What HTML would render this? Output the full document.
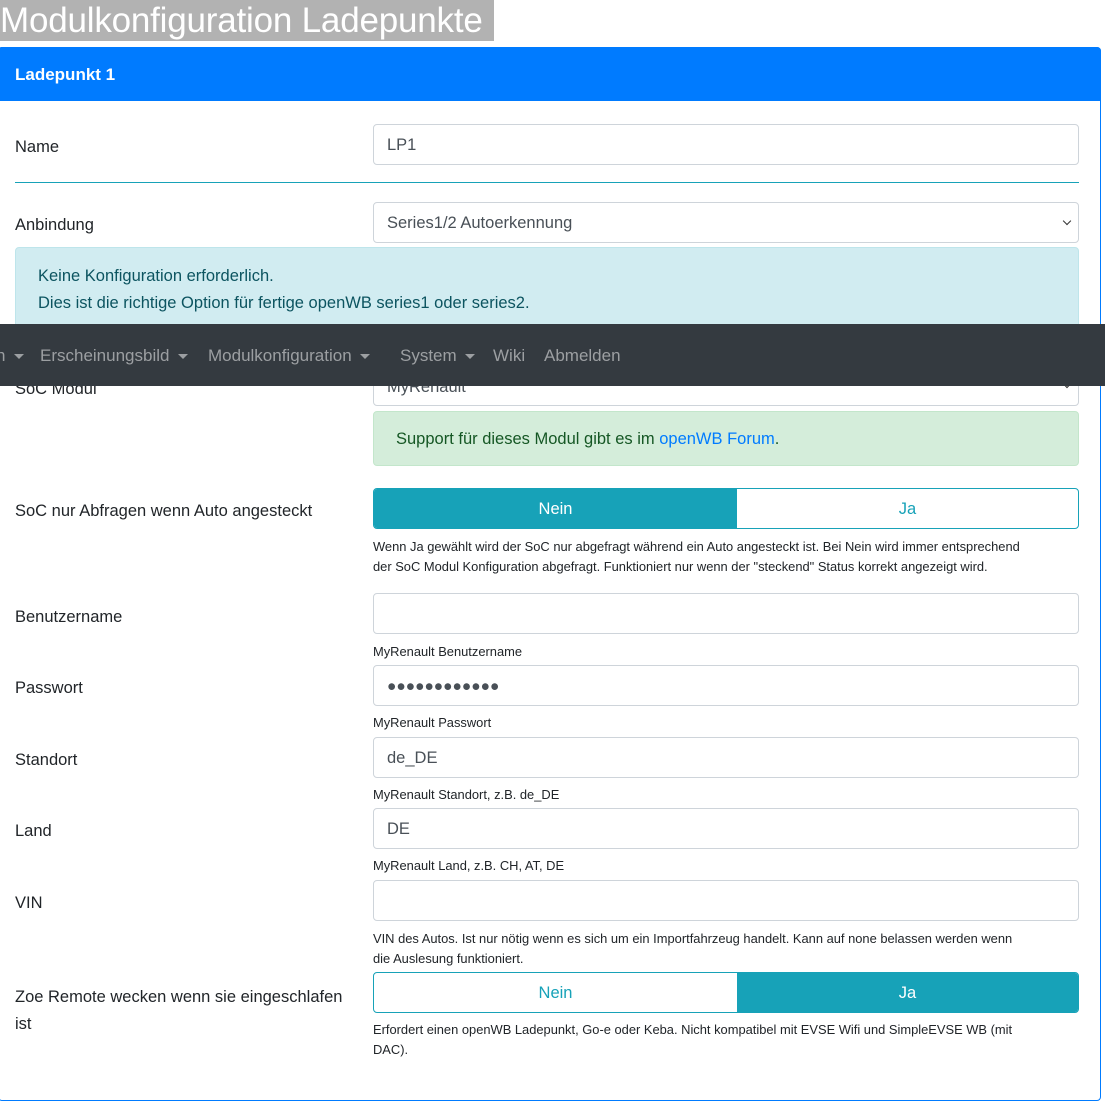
<!DOCTYPE html>
<html><head><meta charset="utf-8"><style>
*{box-sizing:border-box;margin:0;padding:0}
body{width:1105px;height:1108px;background:#fff;font-family:"Liberation Sans",sans-serif;color:#212529;position:relative;overflow:hidden;font-size:16px}
.a{position:absolute;white-space:nowrap}
.title{left:0;top:0;width:494px;height:41px;background:#b2b2b2;color:#fff;font-size:35px;line-height:41px;letter-spacing:-0.2px}
.card{left:-2px;top:47px;width:1103px;height:1054px;border:1px solid #007bff;border-radius:4px}
.hdr{left:-2px;top:47px;width:1103px;height:54px;background:#007bff;color:#fff;font-weight:bold;font-size:17px;line-height:56px;padding-left:17px;border-radius:4px 4px 0 0}
.lbl{left:15px;font-size:16.5px;line-height:22px}
.inp{left:373px;width:706px;height:41px;border:1px solid #ced4da;border-radius:4px;font-size:16.5px;line-height:41px;padding-left:13px;color:#495057;background:#fff}
.help{left:373px;font-size:12.9px;line-height:20px;color:#212529;margin-top:1px}
.btn{height:41px;width:706px;left:373px;border:1px solid #17a2b8;border-radius:4px;display:flex;overflow:hidden}
.btn div{text-align:center;line-height:41px;font-size:16.5px;color:#17a2b8}
.btn div.on{background:#17a2b8;color:#fff}
.caret{position:absolute;right:8px;top:15px;width:6px;height:6px;border-right:1.5px solid #333;border-bottom:1.5px solid #333;transform:rotate(45deg)}
.nav{left:0;top:324px;width:1105px;height:62px;background:#343a40;color:#9c9fa2;font-size:17px;line-height:64px}
.nav span{position:absolute}
.tri{display:inline-block;width:0;height:0;border-left:5px solid transparent;border-right:5px solid transparent;border-top:5px solid #9c9fa2;vertical-align:middle;margin-left:4px}
</style></head><body>
<div class="a title">Modulkonfiguration Ladepunkte</div>
<div class="a card"></div>
<div class="a hdr">Ladepunkt 1</div>

<div class="a lbl" style="top:136px">Name</div>
<div class="a inp" style="top:124px">LP1</div>
<div class="a" style="left:15px;top:182px;width:1064px;height:1px;background:#17a2b8"></div>

<div class="a lbl" style="top:214px">Anbindung</div>
<div class="a inp" style="top:202px">Series1/2 Autoerkennung<span class="caret"></span></div>
<div class="a" style="left:15px;top:247px;width:1064px;height:90px;background:#d1ecf1;border:1px solid #bee5eb;border-radius:4px;color:#0c5460;font-size:16.5px;line-height:27px;padding:15px 22px">Keine Konfiguration erforderlich.<br>Dies ist die richtige Option für fertige openWB series1 oder series2.</div>

<div class="a inp" style="top:365px;height:41px;line-height:43px">MyRenault<span class="caret"></span></div>
<div class="a lbl" style="top:378px">SoC Modul</div>
<div class="a nav"><span style="left:-4px">n <i class="tri"></i></span><span style="left:40px">Erscheinungsbild <i class="tri"></i></span><span style="left:208px">Modulkonfiguration <i class="tri"></i></span><span style="left:400px">System <i class="tri"></i></span><span style="left:493px">Wiki</span><span style="left:544px">Abmelden</span></div>

<div class="a" style="left:373px;top:411px;width:706px;height:55px;background:#d4edda;border:1px solid #c3e6cb;border-radius:4px;color:#155724;font-size:16.5px;line-height:55px;padding-left:22px">Support für dieses Modul gibt es im <span style="color:#007bff">openWB Forum</span>.</div>

<div class="a lbl" style="top:500px">SoC nur Abfragen wenn Auto angesteckt</div>
<div class="a btn" style="top:488px"><div class="on" style="width:363px">Nein</div><div style="flex:1">Ja</div></div>
<div class="a help" style="top:536px">Wenn Ja gewählt wird der SoC nur abgefragt während ein Auto angesteckt ist. Bei Nein wird immer entsprechend<br>der SoC Modul Konfiguration abgefragt. Funktioniert nur wenn der "steckend" Status korrekt angezeigt wird.</div>

<div class="a lbl" style="top:606px">Benutzername</div>
<div class="a inp" style="top:593px"></div>
<div class="a help" style="top:641px">MyRenault Benutzername</div>

<div class="a lbl" style="top:677px">Passwort</div>
<div class="a inp" style="top:665px;font-size:15.5px;color:#495057">●●●●●●●●●●●●</div>
<div class="a help" style="top:712px">MyRenault Passwort</div>

<div class="a lbl" style="top:749px">Standort</div>
<div class="a inp" style="top:737px">de_DE</div>
<div class="a help" style="top:784px">MyRenault Standort, z.B. de_DE</div>

<div class="a lbl" style="top:820px">Land</div>
<div class="a inp" style="top:808px">DE</div>
<div class="a help" style="top:855px">MyRenault Land, z.B. CH, AT, DE</div>

<div class="a lbl" style="top:892px">VIN</div>
<div class="a inp" style="top:880px"></div>
<div class="a help" style="top:928px">VIN des Autos. Ist nur nötig wenn es sich um ein Importfahrzeug handelt. Kann auf none belassen werden wenn<br>die Auslesung funktioniert.</div>

<div class="a lbl" style="top:984px;line-height:27px">Zoe Remote wecken wenn sie eingeschlafen<br>ist</div>
<div class="a btn" style="top:972px"><div style="width:363px">Nein</div><div class="on" style="flex:1">Ja</div></div>
<div class="a help" style="top:1019px">Erfordert einen openWB Ladepunkt, Go-e oder Keba. Nicht kompatibel mit EVSE Wifi und SimpleEVSE WB (mit<br>DAC).</div>
</body></html>
